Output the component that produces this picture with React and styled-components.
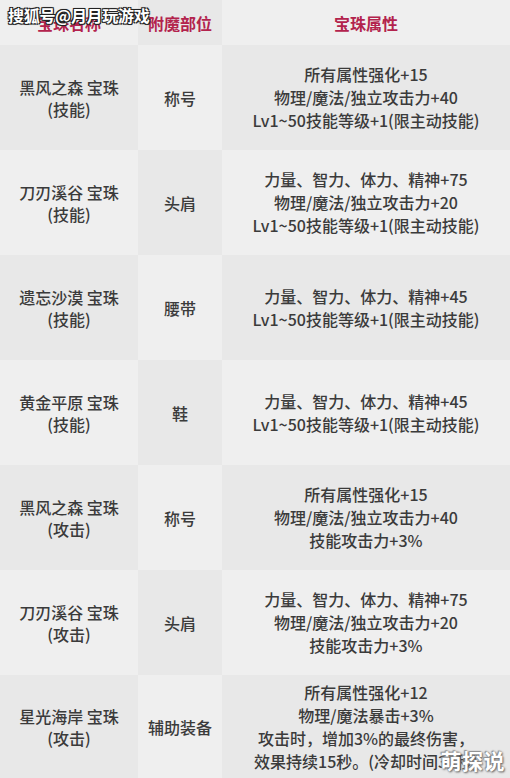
import React from "react";
import styled, { createGlobalStyle } from "styled-components";

const GlobalStyle = createGlobalStyle`
  html, body {
    margin: 0;
    padding: 0;
    background: #ffffff;
  }
  body {
    font-family: "Noto Sans CJK SC", "Noto Sans", sans-serif;
  }
`;

const Page = styled.div`
  position: relative;
  width: 510px;
  height: 778px;
  overflow: hidden;
`;

const Table = styled.div`
  display: grid;
  grid-template-columns: 138px 84px 1fr;
  grid-template-rows: 45px repeat(6, 105px) 104px;
`;

const Cell = styled.div`
  display: flex;
  flex-direction: column;
  align-items: center;
  justify-content: center;
  text-align: center;
  background: ${(p) => (p.$light ? "#efefef" : "#e8e8e8")};
  color: ${(p) => (p.$head ? "#b3234d" : "#3b3b3b")};
  font-size: 16px;
  font-weight: ${(p) => (p.$head ? 700 : 500)};
  line-height: ${(p) => (p.$tight ? "23px" : "22px")};
  white-space: nowrap;
  overflow: hidden;
`;

const Line = styled.span`
  display: block;
`;

const Watermark = styled.div`
  position: absolute;
  left: 8px;
  top: 3px;
  font-size: 16px;
  font-weight: 700;
  color: #ffffff;
  letter-spacing: -0.3px;
  text-shadow: -1px -1px 0 #222, 1px -1px 0 #222, -1px 1px 0 #222,
    1px 1px 0 #222, 0 0 2px #000;
`;

const Stamp = styled.div`
  position: absolute;
  right: 5px;
  bottom: 3px;
  font-size: 21px;
  font-weight: 700;
  color: #ffffff;
  letter-spacing: 0.5px;
  text-shadow: 0 0 2px #777, 1px 1px 2px #666, -1px -1px 1px #999;
`;

const rows = [
  {
    name: ["黑风之森 宝珠", "(技能)"],
    slot: "称号",
    attrs: ["所有属性强化+15", "物理/魔法/独立攻击力+40", "Lv1~50技能等级+1(限主动技能)"],
  },
  {
    name: ["刀刃溪谷 宝珠", "(技能)"],
    slot: "头肩",
    attrs: ["力量、智力、体力、精神+75", "物理/魔法/独立攻击力+20", "Lv1~50技能等级+1(限主动技能)"],
  },
  {
    name: ["遗忘沙漠 宝珠", "(技能)"],
    slot: "腰带",
    attrs: ["力量、智力、体力、精神+45", "Lv1~50技能等级+1(限主动技能)"],
  },
  {
    name: ["黄金平原 宝珠", "(技能)"],
    slot: "鞋",
    attrs: ["力量、智力、体力、精神+45", "Lv1~50技能等级+1(限主动技能)"],
  },
  {
    name: ["黑风之森 宝珠", "(攻击)"],
    slot: "称号",
    attrs: ["所有属性强化+15", "物理/魔法/独立攻击力+40", "技能攻击力+3%"],
  },
  {
    name: ["刀刃溪谷 宝珠", "(攻击)"],
    slot: "头肩",
    attrs: ["力量、智力、体力、精神+75", "物理/魔法/独立攻击力+20", "技能攻击力+3%"],
  },
  {
    name: ["星光海岸 宝珠", "(攻击)"],
    slot: "辅助装备",
    attrs: [
      "所有属性强化+12",
      "物理/魔法暴击+3%",
      "攻击时，增加3%的最终伤害，",
      "效果持续15秒。(冷却时间30秒)",
    ],
  },
];

export default function App() {
  return (
    <Page>
      <GlobalStyle />
      <Table>
        <Cell $head $light>宝珠名称</Cell>
        <Cell $head>附魔部位</Cell>
        <Cell $head $light>宝珠属性</Cell>
        {rows.map((row, i) => {
          const light = i % 2 === 1;
          return (
            <React.Fragment key={i}>
              <Cell $light={light}>
                {row.name.map((t) => (
                  <Line key={t}>{t}</Line>
                ))}
              </Cell>
              <Cell $light={!light}>{row.slot}</Cell>
              <Cell $light={light} $tight>
                {row.attrs.map((t) => (
                  <Line key={t}>{t}</Line>
                ))}
              </Cell>
            </React.Fragment>
          );
        })}
      </Table>
      <Watermark>搜狐号@月月玩游戏</Watermark>
      <Stamp>萌探说</Stamp>
    </Page>
  );
}
